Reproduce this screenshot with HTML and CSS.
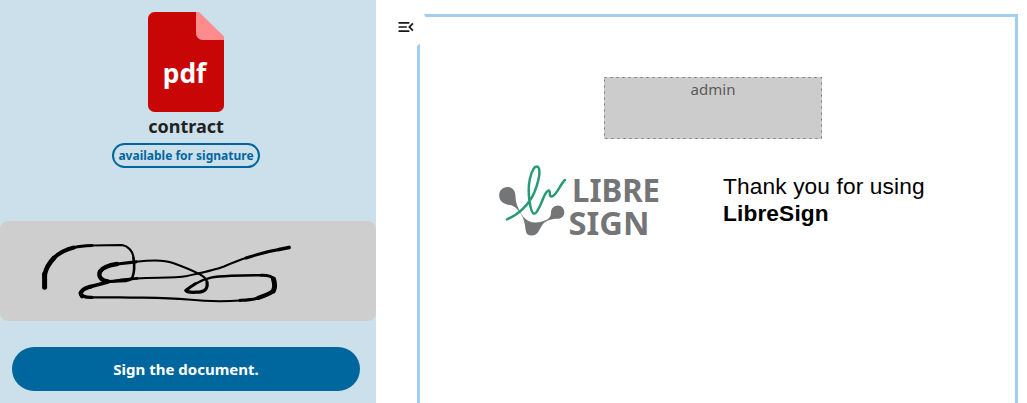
FILE: index.html
```html
<!DOCTYPE html>
<html lang="en">
<head>
<meta charset="utf-8">
<title>LibreSign</title>
<link rel="stylesheet" href="styles.css">
</head>
<body>
<div class="app">
  <aside class="sidebar">
    <header class="file">
      <svg class="file-icon" viewBox="0 0 76 100" width="76" height="100">
        <path fill="#c90606" d="M6.500 0H50L76 26v67.500a6.500 6.500 0 0 1-6.500 6.500h-63A6.500 6.500 0 0 1 0 93.500v-87A6.500 6.500 0 0 1 6.500 0z"/>
        <path fill="#ff8c8c" d="M48 0h3l25 24.500V28H54.500A6.500 6.500 0 0 1 48 21.500z"/>
        <text class="file-type" x="36.500" y="71.300" text-anchor="middle" textLength="43.500" lengthAdjust="spacingAndGlyphs">pdf</text>
      </svg>
      <h1 class="file-name">contract</h1>
      <span class="status">available for signature</span>
    </header>
    <div class="signature">
      <svg viewBox="0 221 376 100" width="376" height="100">
        <g fill="none" stroke="#000" stroke-linecap="round" stroke-linejoin="round">
          <path stroke-width="5" d="M44.600 287.300V274"/>
          <path stroke-width="4.600" d="M44.600 275C46 268 50 262 54 258"/>
          <path stroke-width="4" d="M54 258C59 253 66 249.500 74 247.500"/>
          <path stroke-width="2.800" d="M74 247.500C80 246 86 245.700 92 245.500"/>
          <path stroke-width="2.200" d="M92 245.500L122 245C128 246 133 251 133.500 258"/>
          <path stroke-width="2.600" d="M133.500 258C134.700 266 134.500 272 132.500 277Q131 280.500 126 280.700"/>
          <path stroke-width="3" d="M126 280.700L108 281.400"/>
          <path stroke-width="4.400" d="M108 281.400C101 281 98 276 100 271.500C103 267 110 265 117 264"/>
          <path stroke-width="3.200" d="M117 264L136 261.800"/>
          <path stroke-width="2" d="M136 261.800C150 260 163 259 173 263C184 267 192 270 200 274.500C204 276.500 206.500 279 207 282"/>
          <path stroke-width="3.200" d="M207 282C208 289 205 292.200 196 292.200Q188 292.700 185.800 290.500Q190 287 195 284"/>
          <path stroke-width="2.400" d="M194 284.500C206 277 215 276.500 231 275.700L261 275.200"/>
          <path stroke-width="3" d="M261 275.200C268 275 272 276 273.500 279"/>
          <path stroke-width="5" d="M273.500 279C275 284 275 288 273.300 291"/>
          <path stroke-width="4" d="M273.300 291C269 294 264 296 258 298"/>
          <path stroke-width="3.200" d="M258 298C252 300 248 300 240 300.300"/>
          <path stroke-width="2.200" d="M240 300.500C220 302 202 301 188 299.500C165 297.500 150 298 120 297.300L92 297.300"/>
          <path stroke-width="3.200" d="M92 297.300C84 297.500 81 296 80.200 293"/>
          <path stroke-width="4.200" d="M82 296.200C78.500 292 83 288.800 91 286.600"/>
          <path stroke-width="3.600" d="M91 286.600L107 282.300"/>
          <path stroke-width="2.600" d="M107 282.300C118 280 127 279 137 278.400"/>
          <path stroke-width="2" d="M137 278.400C155 277 172 278.500 187 276C205 272 215 270 224 266.500C232 263 239 260 246 258"/>
          <path stroke-width="3" d="M246 258C257 254.500 270 251 279 249.500"/>
          <path stroke-width="3.800" d="M279 249.500L289 247.500"/>
        </g>
      </svg>
    </div>
    <button class="sign">Sign the document.</button>
  </aside>
  <main class="viewer">
    <button class="toggle" aria-label="Toggle sidebar">
      <svg viewBox="0 0 24 24" width="20" height="20"><path fill="#171717" d="M21 15.610 19.590 17l-5.010-5 5.010-5L21 8.390 17.440 12 21 15.610M3 6h13v2H3V6m0 7v-2h10v2H3m0 5v-2h13v2H3z"/></svg>
    </button>
    <section class="page">
      <div class="signer"><svg class="dash" width="218" height="62"><rect x=".5" y=".5" width="217" height="61"/></svg><span>admin</span></div>
      <div class="brand">
        <svg class="logo" viewBox="495 160 170 90" width="170" height="90">
          <path fill="#737577" d="M507.500 187C512.500 187 515.500 191 515.500 196C515.500 204 519 210 523 216.500Q530 225 542 221.500C549 219.500 551 217 551 212.500C551 208.500 554 205.500 557.800 205.500C561.500 205.500 564.300 208.500 564.300 212.200C564.300 216 561.500 218.800 557.500 218.800C552 218.800 546 220.500 543 224C539 229 538.500 235.500 531.500 235.500C524.500 235.500 526 229 524.500 223C522.500 214 518 208.500 511.500 205.300C505 204.500 499.200 202 499.200 195.500C499.200 190.500 502.800 187 507.500 187z"/>
          <path fill="none" stroke="#279b74" stroke-width="2.500" stroke-linecap="round" stroke-linejoin="round" d="M507 219.300C518 215 529 205 534.500 192C538 183 540.500 174 539 168.500C538 165.700 535.500 165.800 533.500 169C528.500 178 528 190 529.500 201C530.500 208 532 213.500 534 213.800C537 214 540.500 205 542.500 200C545 193.500 547.500 190 549 190.500C551 192 548.500 197 551.500 196.500C557 195.500 560 184 565 180"/>
          <text class="logo-text" x="572" y="202" textLength="88" lengthAdjust="spacingAndGlyphs">LIBRE</text>
          <text class="logo-text" x="568.500" y="235" textLength="81" lengthAdjust="spacingAndGlyphs">SIGN</text>
        </svg>
        <p class="thanks">Thank you for using<br><b>LibreSign</b></p>
      </div>
    </section>
  </main>
</div>
</body>
</html>
```
FILE: styles.css
```css
* { box-sizing: border-box; }
body {
  margin: 0;
  background: #fff;
  font-family: "Noto Sans", sans-serif;
}
.app {
  display: flex;
  height: 403px;
  overflow: hidden;
}
.sidebar {
  display: flex;
  flex-direction: column;
  width: 376px;
  flex: none;
  background: #cce0eb;
}
.file {
  display: flex;
  flex-direction: column;
  align-items: center;
  height: 221px;
  padding: 12px 4px 0 0;
}
.file-icon { display: block; flex: none; }
.file-type {
  fill: #fff;
  font-size: 27px;
  font-weight: 700;
}
.file-name {
  margin: 2px 0 4px;
  color: #222;
  font-size: 18px;
  font-weight: 700;
  line-height: 25px;
}
.status {
  width: 148px;
  height: 25px;
  border: 2px solid #00679e;
  border-radius: 13px;
  color: #00679e;
  font-size: 12px;
  font-weight: 700;
  line-height: 21px;
  text-align: center;
  white-space: nowrap;
}
.signature {
  height: 100px;
  border-radius: 8px;
  background: #cecece;
}
.signature svg { display: block; }
.sign {
  width: 348px;
  height: 44px;
  margin: 26px 0 0 12px;
  padding: 0;
  border: 0;
  border-radius: 22px;
  background: #00679e;
  color: #fff;
  font: 700 15px/24px "Noto Sans", sans-serif;
}
.viewer {
  position: relative;
  flex: 1;
  padding: 14px 9px 0 41px;
}
.toggle {
  position: absolute;
  top: 5px;
  left: 8px;
  display: flex;
  align-items: center;
  justify-content: center;
  width: 44px;
  height: 44px;
  padding: 0;
  border: 0;
  border-radius: 50%;
  background: #fff;
}
.page {
  height: 420px;
  padding: 60px 0 0 79px;
  border: 3px solid #a0cdf0;
}
.signer {
  display: grid;
  width: 218px;
  height: 62px;
  margin-left: 105px;
  background: #ccc;
  color: #5a5a5a;
  font-size: 15px;
  line-height: 24px;
  text-align: center;
}
.signer > * { grid-area: 1 / 1; }
.dash { display: block; }
.dash rect {
  fill: none;
  stroke: #77778a;
  stroke-dasharray: 2 4;
}
.brand {
  display: flex;
  align-items: flex-start;
  margin: 21px 0 0 -4px;
}
.logo { flex: none; overflow: visible; }
.logo-text {
  fill: #737577;
  font-size: 32.500px;
  font-weight: 700;
}
.thanks {
  margin: 13px 0 0 58px;
  color: #000;
  font: 22.7px/27px "Liberation Sans", Arial, sans-serif;
  letter-spacing: .13px;
  white-space: nowrap;
}
```
